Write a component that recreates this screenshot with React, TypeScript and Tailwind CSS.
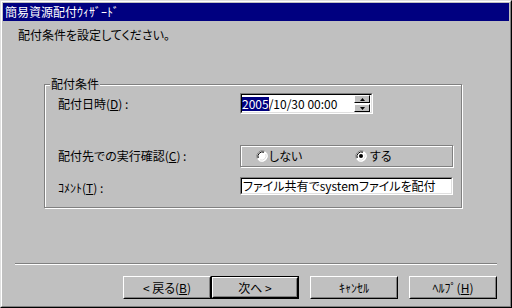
import React from 'react';

const font = "font-['Noto_Sans_CJK_JP',sans-serif] [font-feature-settings:'palt'] text-[12px] leading-[14px] text-black";

// half-width kana look right only without proportional alternates
const Hw: React.FC<{ children: React.ReactNode }> = ({ children }) => (
  <span className="[font-feature-settings:normal]">{children}</span>
);

const Key: React.FC<{ k: string }> = ({ k }) => <span className="underline underline-offset-[1px]">{k}</span>;

const Sunken: React.FC<{ className?: string; children?: React.ReactNode }> = ({ className = '', children }) => (
  <div className={`border border-t-[#808080] border-l-[#808080] border-r-white border-b-white ${className}`}>
    <div className="h-full border border-t-black border-l-black border-r-[#dfdfdf] border-b-[#dfdfdf] bg-white flex items-center">
      {children}
    </div>
  </div>
);

const SpinButton: React.FC<{ up?: boolean }> = ({ up }) => (
  <div className="h-[8px] w-[16px] border border-t-white border-l-white border-r-black border-b-black bg-[#c0c0c0] flex items-center justify-center">
    <svg width="5" height="3" viewBox="0 0 5 3">
      {up ? <path d="M2.5 0 L5 3 L0 3 Z" fill="black" /> : <path d="M0 0 L5 0 L2.5 3 Z" fill="black" />}
    </svg>
  </div>
);

const Radio: React.FC<{ checked?: boolean }> = ({ checked }) => (
  <svg width="12" height="12" viewBox="0 0 12 12" className="shrink-0">
    <circle cx="6" cy="6" r="5.5" fill="white" />
    <path d="M1.2 8.5 A5.5 5.5 0 0 1 8.5 1.2" stroke="#808080" strokeWidth="1" fill="none" />
    <path d="M2.2 8 A4.5 4.5 0 0 1 8 2.2" stroke="#000" strokeWidth="1" fill="none" />
    <path d="M3.5 10.8 A5.5 5.5 0 0 0 10.8 3.5" stroke="#fff" strokeWidth="1" fill="none" />
    <path d="M4 9.8 A4.5 4.5 0 0 0 9.8 4" stroke="#dfdfdf" strokeWidth="1" fill="none" />
    {checked && <circle cx="6" cy="6" r="2" fill="black" />}
  </svg>
);

const WinButton: React.FC<{ isDefault?: boolean; children: React.ReactNode }> = ({ isDefault, children }) => (
  <div className={`w-[88px] h-[23px] ${isDefault ? 'border border-black' : ''}`}>
    <div className="h-full border border-t-white border-l-white border-r-black border-b-black">
      <div className="h-full border border-t-[#c0c0c0] border-l-[#c0c0c0] border-r-[#808080] border-b-[#808080] flex items-center justify-center">
        {children}
      </div>
    </div>
  </div>
);

export default function App() {
  return (
    <div className={`${font} w-[512px] h-[308px] bg-[#c0c0c0] border border-t-[#dfdfdf] border-l-[#dfdfdf] border-r-black border-b-black`}>
      <div className="h-full border border-t-white border-l-white border-r-[#808080] border-b-[#808080] p-px flex flex-col">
        {/* title bar */}
        <div className="h-[18px] bg-[#000080] text-white pl-[2px] flex items-center">
          簡易資源配付<Hw>ｳｨｻﾞｰﾄﾞ</Hw>
        </div>

        <div className="mt-[7px] pl-[15px] h-[14px]">配付条件を設定してください。</div>

        {/* group box */}
        <div className="relative mt-[42px] ml-[41px] w-[418px] h-[124px] border border-[#808080] shadow-[inset_1px_1px_0_white,1px_1px_0_white]">
          <span className="absolute left-[5px] top-[-8px] px-px bg-[#c0c0c0]">配付条件</span>
          <div className="pl-[13px] pt-[8px] grid grid-cols-[182px_auto] items-center">
            <div>配付日時(<Key k="D" />) :</div>
            <Sunken className="w-[133px] h-[21px]">
              <div className="flex-1 flex items-center">
                <span className="bg-[#000080] text-white">2005</span>
                <span>/10/30 00:00</span>
              </div>
              <div className="flex flex-col gap-px mr-px">
                <SpinButton up />
                <SpinButton />
              </div>
            </Sunken>

            <div className="mt-[31px]">配付先での実行確認(<Key k="C" />) :</div>
            <div className="mt-[31px] w-[213px] h-[22px] border border-[#808080] shadow-[inset_1px_1px_0_white,1px_1px_0_white] flex items-center pl-[15px]">
              <div className="w-[99px] flex items-center gap-px">
                <Radio />
                <span>しない</span>
              </div>
              <div className="flex items-center gap-px">
                <Radio checked />
                <span className="ml-[2px]">する</span>
              </div>
            </div>

            <div className="mt-[10px] pt-[3px]"><Hw>ｺﾒﾝﾄ</Hw>(<Key k="T" />) :</div>
            <Sunken className="mt-[10px] w-[213px] h-[18px]">
              <span className="pl-px">ファイル共有でsystemファイルを配付</span>
            </Sunken>
          </div>
        </div>

        {/* separator */}
        <div className="mt-[55px] ml-[12px] w-[482px] h-[2px] border-t border-t-[#808080] border-b border-b-white" />

        {/* buttons */}
        <div className="mt-[11px] pl-[120px] flex">
          <WinButton>&lt; 戻る(<Key k="B" />)</WinButton>
          <WinButton isDefault>次へ &gt;</WinButton>
          <div className="w-[11px]" />
          <WinButton><Hw>ｷｬﾝｾﾙ</Hw></WinButton>
          <div className="w-[11px]" />
          <WinButton><Hw>ﾍﾙﾌﾟ</Hw>(<Key k="H" />)</WinButton>
        </div>
      </div>
    </div>
  );
}
